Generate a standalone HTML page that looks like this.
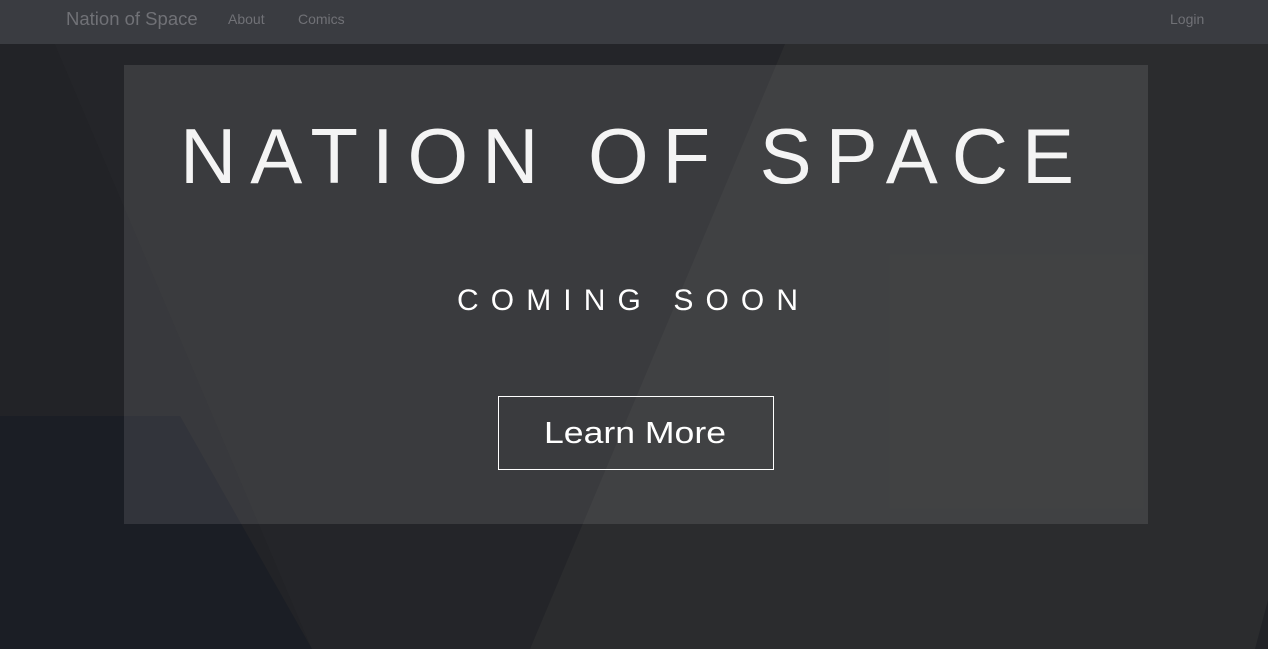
<!DOCTYPE html>
<html><head><meta charset="utf-8"><style>
html,body{margin:0;padding:0;width:1268px;height:649px;overflow:hidden;background:#27282c;font-family:"Liberation Sans",sans-serif}
#bg{position:absolute;left:0;top:0}
nav{position:absolute;left:0;top:0;width:1268px;height:44px;background:#3a3c41;color:#707176}
nav span{position:absolute;top:0;line-height:38px;font-size:14px}
.card{position:absolute;left:124px;top:65px;width:1024px;height:459px;background:rgba(255,255,255,0.1)}
.btn{position:absolute;left:498px;top:396px;width:274px;height:72px;border:1px solid #fff;box-sizing:content-box}
</style></head><body>
<svg id="bg" width="1268" height="649">
<rect width="1268" height="649" fill="#2b2c2e"/>
<polygon points="0,44 55,44 312,649 0,649" fill="#222327"/>
<polygon points="0,416 180,416 312,649 0,649" fill="#1b1e25"/>
<polygon points="55,44 785,44 530,649 312,649" fill="#242529"/>
<polygon points="1268,600 1268,649 1255,649" fill="#222327"/>
</svg>
<nav>
<span style="left:66px;font-size:18.5px">Nation of Space</span>
<span style="left:228px">About</span>
<span style="left:298px">Comics</span>
<span style="left:1170px">Login</span>
</nav>
<div class="card"></div>
<svg style="position:absolute;left:0;top:0" width="1268" height="649">
<text x="180" y="183" font-family="Liberation Sans" font-size="78" fill="#f4f4f4" textLength="894" lengthAdjust="spacing">NATION OF SPACE</text>
<text x="457" y="310" font-family="Liberation Sans" font-size="30" fill="#fff" textLength="341" lengthAdjust="spacing">COMING SOON</text>
<text x="544" y="443" font-family="Liberation Sans" font-size="31" fill="#fff" textLength="182" lengthAdjust="spacingAndGlyphs">Learn More</text>
</svg>
<div class="btn"></div>
</body></html>
